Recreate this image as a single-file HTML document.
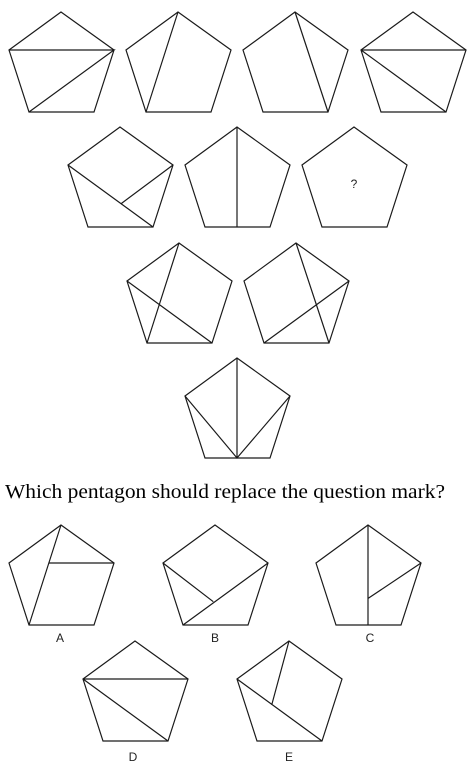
<!DOCTYPE html>
<html><head><meta charset="utf-8"><style>
html,body{margin:0;padding:0;background:#fff;width:468px;height:767px;overflow:hidden}
svg{position:absolute;left:0;top:0}
</style></head><body>
<svg width="468" height="767" viewBox="0 0 468 767" xmlns="http://www.w3.org/2000/svg">
<defs>
<g id="p"><polygon points="0,0 -52,38 -32,100 33,100 53,38" fill="none" stroke="#1a1a1a" stroke-width="1.2" stroke-linejoin="miter"/></g>
</defs>
<g fill="none" stroke="#1a1a1a" stroke-width="1.2">
<g transform="translate(61,12)"><use href="#p"/><path d="M-52,38H53L-32,100"/></g>
<g transform="translate(178,12)"><use href="#p"/><path d="M0,0L-32,100"/></g>
<g transform="translate(295,12)"><use href="#p"/><path d="M0,0L33,100"/></g>
<g transform="translate(413,12)"><use href="#p"/><path d="M-52,38H53M-52,38L33,100"/></g>
<g transform="translate(120,127)"><use href="#p"/><path d="M-52,38L33,100M53,38L0.7,77"/></g>
<g transform="translate(237,127)"><use href="#p"/><path d="M0,0V100"/></g>
<g transform="translate(354,127)"><use href="#p"/></g>
<g transform="translate(179,243)"><use href="#p"/><path d="M0,0L-32,100M-52,38L33,100"/></g>
<g transform="translate(296,243)"><use href="#p"/><path d="M0,0L33,100M53,38L-32,100"/></g>
<g transform="translate(237,358)"><use href="#p"/><path d="M0,0V100M-52,38L0,100L53,38"/></g>
<g transform="translate(61,525)"><use href="#p"/><path d="M0,0L-32,100M53,38H-12.5"/></g>
<g transform="translate(215,525)"><use href="#p"/><path d="M53,38L-32,100M-52,38L-1.7,76.7"/></g>
<g transform="translate(368,525)"><use href="#p"/><path d="M0,0V100M53,38L0.3,73.3"/></g>
<g transform="translate(135,641)"><use href="#p"/><path d="M-52,38H53M-52,38L33,100"/></g>
<g transform="translate(289,641)"><use href="#p"/><path d="M-52,38L33,100M0,0L-17.3,64"/></g>
</g>
<text x="354" y="188" font-family="Liberation Sans, sans-serif" font-size="12" text-anchor="middle" fill="#222">?</text>
<text x="5" y="498" font-family="Liberation Serif, serif" font-size="20" textLength="440" lengthAdjust="spacingAndGlyphs" fill="#000">Which pentagon should replace the question mark?</text>
<g font-family="Liberation Sans, sans-serif" font-size="12" text-anchor="middle" fill="#222">
<text x="60" y="642">A</text>
<text x="215" y="642">B</text>
<text x="370" y="642">C</text>
<text x="133" y="761">D</text>
<text x="289" y="761">E</text>
</g>
</svg>
</body></html>
